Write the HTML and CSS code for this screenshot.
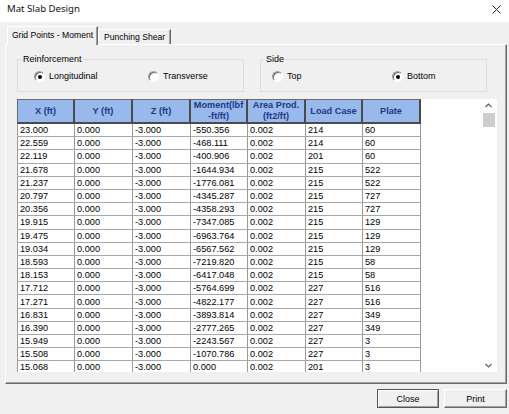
FILE: index.html
```html
<!DOCTYPE html>
<html lang="en">

<head>
    <meta charset="UTF-8">
    <meta name="viewport" content="width=device-width, initial-scale=1.0">
    <title>Mat Slab Design</title>
    <link rel="stylesheet" href="styles.css">
</head>

<body>
    <div class="titlebar">
        <span class="title">Mat Slab Design</span>
        <svg class="close-x" width="9" height="9" viewBox="0 0 9 9">
            <path d="M0.5 0.5 L8.5 8.5 M8.5 0.5 L0.5 8.5" stroke="#222" stroke-width="1" fill="none" />
        </svg>
    </div>

    <div class="tabs">
        <div class="tab active">Grid Points - Moment</div>
        <div class="tab">Punching Shear</div>
    </div>

    <div class="panel">
        <div class="groups">
            <div class="group">
                <span class="group-label">Reinforcement</span>
                <div class="options opts-left">
                    <label class="option"><span class="radio checked"></span>Longitudinal</label>
                    <label class="option"><span class="radio"></span>Transverse</label>
                </div>
            </div>
            <div class="group">
                <span class="group-label">Side</span>
                <div class="options opts-right">
                    <label class="option"><span class="radio"></span>Top</label>
                    <label class="option"><span class="radio checked"></span>Bottom</label>
                </div>
            </div>
        </div>

        <div class="grid">
            <div class="table-wrap">
                <table class="results">
                    <thead>
                        <tr>
                            <th>X (ft)</th>
                            <th>Y (ft)</th>
                            <th>Z (ft)</th>
                            <th>Moment(lbf<br>-ft/ft)</th>
                            <th>Area Prod.<br>(ft2/ft)</th>
                            <th>Load Case</th>
                            <th>Plate</th>
                        </tr>
                    </thead>
                    <tbody>
                        <tr><td>23.000</td><td>0.000</td><td>-3.000</td><td>-550.356</td><td>0.002</td><td>214</td><td>60</td></tr>
                        <tr><td>22.559</td><td>0.000</td><td>-3.000</td><td>-468.111</td><td>0.002</td><td>214</td><td>60</td></tr>
                        <tr><td>22.119</td><td>0.000</td><td>-3.000</td><td>-400.906</td><td>0.002</td><td>201</td><td>60</td></tr>
                        <tr><td>21.678</td><td>0.000</td><td>-3.000</td><td>-1644.934</td><td>0.002</td><td>215</td><td>522</td></tr>
                        <tr><td>21.237</td><td>0.000</td><td>-3.000</td><td>-1776.081</td><td>0.002</td><td>215</td><td>522</td></tr>
                        <tr><td>20.797</td><td>0.000</td><td>-3.000</td><td>-4345.287</td><td>0.002</td><td>215</td><td>727</td></tr>
                        <tr><td>20.356</td><td>0.000</td><td>-3.000</td><td>-4358.293</td><td>0.002</td><td>215</td><td>727</td></tr>
                        <tr><td>19.915</td><td>0.000</td><td>-3.000</td><td>-7347.085</td><td>0.002</td><td>215</td><td>129</td></tr>
                        <tr><td>19.475</td><td>0.000</td><td>-3.000</td><td>-6963.764</td><td>0.002</td><td>215</td><td>129</td></tr>
                        <tr><td>19.034</td><td>0.000</td><td>-3.000</td><td>-6567.562</td><td>0.002</td><td>215</td><td>129</td></tr>
                        <tr><td>18.593</td><td>0.000</td><td>-3.000</td><td>-7219.820</td><td>0.002</td><td>215</td><td>58</td></tr>
                        <tr><td>18.153</td><td>0.000</td><td>-3.000</td><td>-6417.048</td><td>0.002</td><td>215</td><td>58</td></tr>
                        <tr><td>17.712</td><td>0.000</td><td>-3.000</td><td>-5764.699</td><td>0.002</td><td>227</td><td>516</td></tr>
                        <tr><td>17.271</td><td>0.000</td><td>-3.000</td><td>-4822.177</td><td>0.002</td><td>227</td><td>516</td></tr>
                        <tr><td>16.831</td><td>0.000</td><td>-3.000</td><td>-3893.814</td><td>0.002</td><td>227</td><td>349</td></tr>
                        <tr><td>16.390</td><td>0.000</td><td>-3.000</td><td>-2777.265</td><td>0.002</td><td>227</td><td>349</td></tr>
                        <tr><td>15.949</td><td>0.000</td><td>-3.000</td><td>-2243.567</td><td>0.002</td><td>227</td><td>3</td></tr>
                        <tr><td>15.508</td><td>0.000</td><td>-3.000</td><td>-1070.786</td><td>0.002</td><td>227</td><td>3</td></tr>
                        <tr><td>15.068</td><td>0.000</td><td>-3.000</td><td>0.000</td><td>0.002</td><td>201</td><td>3</td></tr>
                    </tbody>
                </table>
            </div>

            <!-- scrollbar -->
            <div class="vscroll">
                <div class="arrow">
                    <svg width="7" height="5" viewBox="0 0 7 5">
                        <path d="M0.5 4 L3.5 1 L6.5 4" stroke="#606060" stroke-width="1.2" fill="none" />
                    </svg>
                </div>
                <div class="thumb"></div>
                <div class="spacer"></div>
                <div class="arrow">
                    <svg width="7" height="5" viewBox="0 0 7 5">
                        <path d="M0.5 1 L3.5 4 L6.5 1" stroke="#606060" stroke-width="1.2" fill="none" />
                    </svg>
                </div>
            </div>
        </div>
    </div>

    <div class="buttons">
        <button class="btn default">Close</button>
        <button class="btn print">Print</button>
    </div>
</body>

</html>
```

FILE: styles.css
```css
body {
    margin: 0;
    width: 509px;
    height: 414px;
    overflow: hidden;
    background-color: #f0f0f0;
    font-family: 'Liberation Sans', Arial, sans-serif;
    font-size: 9px;
    color: #000;
}

.titlebar {
    height: 22px;
    box-sizing: border-box;
    background-color: #fff;
    display: flex;
    justify-content: space-between;
    align-items: flex-start;
    padding: 3px 8px 0 7px;
}

.title {
    font-family: 'Noto Sans', 'Liberation Sans', sans-serif;
    font-size: 9.6px;
    line-height: 12px;
    color: #111;
}

.close-x {
    margin-top: 2px;
}

/* tabs */
.tabs {
    display: flex;
    align-items: flex-end;
    height: 19px;
    margin-top: 4px;
    margin-bottom: -1px;
    padding-left: 7px;
    position: relative;
    z-index: 1;
}

.tab {
    box-sizing: border-box;
    height: 15px;
    margin-bottom: 1px;
    padding-top: 2px;
    width: 73px;
    text-align: center;
    font-size: 8.6px;
    line-height: 11px;
    background-color: #f0f0f0;
    border-top: 1px solid #fff;
    border-left: 1px solid #fff;
    border-right: 1px solid #696969;
    box-shadow: inset -1px 0 #a0a0a0;
}

.tab.active {
    width: 91px;
    height: 19px;
    margin-bottom: 0;
    padding-top: 3px;
}

/* panel */
.panel {
    box-sizing: border-box;
    width: 502px;
    height: 340px;
    margin-left: 5px;
    padding: 14px 0 0 11px;
    border: 1px solid;
    border-color: #fff #696969 #696969 #fff;
    box-shadow: inset -1px -1px #a0a0a0;
}

.groups {
    display: flex;
    gap: 16px;
}

.group {
    position: relative;
    box-sizing: border-box;
    width: 227px;
    height: 33px;
    border: 1px solid #dcdcdc;
    padding-top: 10px;
}

.group-label {
    position: absolute;
    top: -6px;
    left: 4px;
    padding: 0 1px;
    line-height: 11px;
    background-color: #f0f0f0;
}

.options {
    display: grid;
    line-height: 12px;
}

.opts-left {
    grid-template-columns: 114px auto;
    padding-left: 16px;
}

.opts-right {
    grid-template-columns: 120px auto;
    padding-left: 11px;
}

.option {
    display: flex;
    align-items: center;
    gap: 4px;
}

.radio {
    position: relative;
    box-sizing: border-box;
    width: 11px;
    height: 11px;
    border-radius: 50%;
    border: 1px solid;
    border-color: #a0a0a0 #fff #fff #a0a0a0;
    background-color: #fff;
    box-shadow: inset 1px 1px #696969;
}

.radio.checked::after {
    content: '';
    position: absolute;
    left: 3px;
    top: 3px;
    width: 4px;
    height: 4px;
    border-radius: 50%;
    background-color: #000;
}

/* results grid */
.grid {
    display: flex;
    width: 480px;
    height: 273px;
    margin-top: 7px;
    background-color: #fff;
    overflow: hidden;
}

.table-wrap {
    flex: 1;
    overflow: hidden;
}

.results {
    border-collapse: separate;
    border-spacing: 0;
    table-layout: fixed;
    width: 404px;
}

.results th,
.results td {
    box-sizing: border-box;
    width: 58px;
    padding: 0;
    overflow: hidden;
    white-space: nowrap;
}

.results th:nth-child(4),
.results th:nth-child(6) {
    width: 57px;
}

.results th {
    height: 25px;
    background-color: #99b8ec;
    color: #1c3a86;
    font-weight: bold;
    font-size: 9.2px;
    line-height: 11px;
    text-align: center;
    vertical-align: middle;
    border-top: 1px solid #6b6b6b;
    border-right: 2px solid #4a4a4a;
    border-bottom: 2px solid #4a4a4a;
}

.results th:first-child {
    border-left: 1px solid #6b6b6b;
}

.results td {
    height: 13.2px;
    line-height: 12px;
    padding-left: 2px;
    font-size: 9.2px;
    border-right: 1px solid #9a9a9a;
    border-bottom: 1px solid #a8a8a8;
}

.results td:first-child {
    border-left: 1px solid #9a9a9a;
}

.vscroll {
    width: 17px;
    display: flex;
    flex-direction: column;
    align-items: center;
    background-color: #fff;
}

.arrow {
    height: 12px;
    display: flex;
    align-items: center;
    justify-content: center;
}

.vscroll .arrow:last-child {
    height: 14px;
}

.thumb {
    width: 12px;
    height: 14px;
    margin-top: 2px;
    background-color: #cdcdcd;
}

.spacer {
    flex: 1;
}

/* bottom buttons */
.buttons {
    display: flex;
    justify-content: flex-end;
    gap: 5px;
    margin-top: 5px;
    padding-right: 2px;
}

.btn {
    box-sizing: border-box;
    height: 19px;
    width: 63px;
    padding: 0;
    font-family: 'Liberation Sans', Arial, sans-serif;
    font-size: 9px;
    color: #000;
    background-color: #f0f0f0;
    border: 1px solid;
    border-color: #fff #696969 #696969 #fff;
    box-shadow: inset -1px -1px #a0a0a0;
}

.btn.default {
    width: 62px;
    border-color: #555;
    box-shadow: inset 1px 1px #fff, inset -1px -1px #a0a0a0;
}
```
